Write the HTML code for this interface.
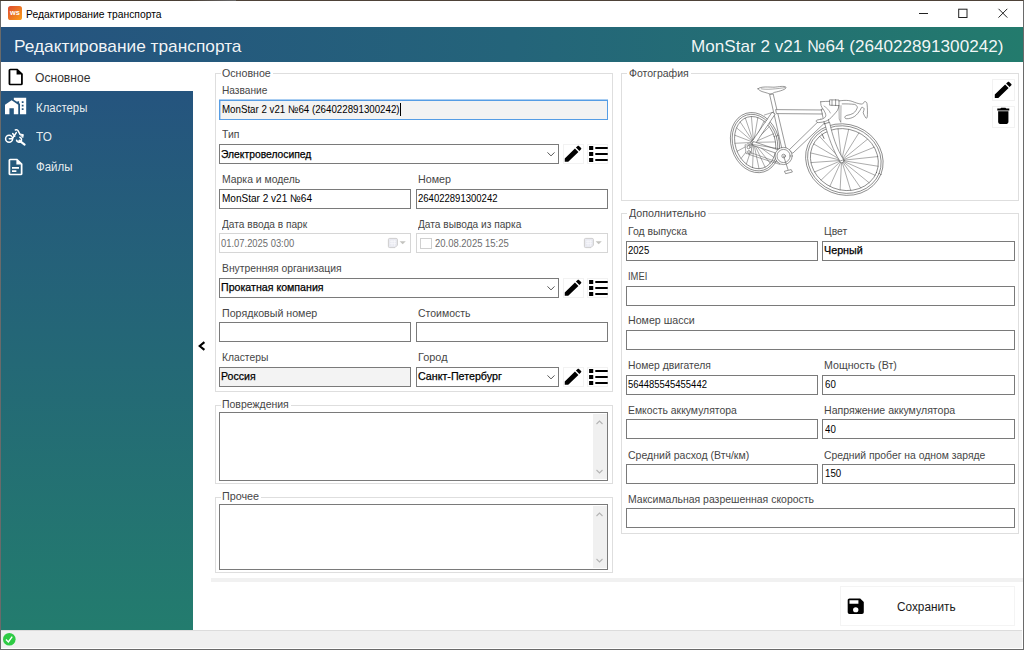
<!DOCTYPE html>
<html lang="ru">
<head>
<meta charset="utf-8">
<title>Редактирование транспорта</title>
<style>
*{box-sizing:border-box;margin:0;padding:0}
html,body{width:1024px;height:650px;overflow:hidden;background:#fff}
body{font-family:"Liberation Sans",sans-serif;font-size:12px;color:#000;position:relative}
div,svg{position:absolute}
svg{display:block;overflow:visible}
#frame{left:0;top:0;width:1024px;height:650px;border:1px solid #6a6a6a;border-top-color:#4e4238;z-index:50;pointer-events:none}
#titlebar{left:1px;top:1px;width:1022px;height:26px;background:#fff}
#header{left:1px;top:27px;width:1022px;height:35px;background:linear-gradient(90deg,#25527f 0%,#24647a 50%,#237b6d 100%)}
#side{left:1px;top:62px;width:192px;height:568px;background:linear-gradient(180deg,#25527f 0%,#237c6e 100%)}
#sel{left:1px;top:62px;width:192px;height:29px;background:#fff}
#status{left:1px;top:630px;width:1021px;height:18px;background:#f0f0f0;border-top:1px solid #dcdcdc}
#sep{left:211px;top:578px;width:812px;height:4px;background:#f1f1f1}
.gb{border:1px solid #dedede}
.lgbg{height:5px;background:#fff}
.in{border:1px solid #7a7a7a;background:#fff}
.in.ro{background:#f3f3f3}
.in.dis{border-color:#d6d6d6}
.in.foc{border-color:#569de5;box-shadow:0 -1px 0 rgba(86,157,229,.5),inset 1px 0 0 rgba(86,157,229,.4)}
.btn{border:1px solid #f2f2f2;background:#fff}
.t{line-height:16px;white-space:nowrap;transform-origin:0 50%}
.t.txb{-webkit-text-stroke:0.25px #000}
.t.title{font-size:10.6px;color:#000;font-weight:400}
.t.hdr{font-size:17px;color:rgba(255,255,255,.94);font-weight:400}
.t.side{font-size:12px;color:rgba(255,255,255,.9);font-weight:400}
.t.sidesel{font-size:12px;color:#333;font-weight:400}
.t.lb{font-size:10.4px;color:#464646;font-weight:400}
.t.lg{font-size:10.4px;color:#464646;font-weight:400}
.t.tx{font-size:11px;color:#000;font-weight:400}
.t.txd{font-size:11px;color:#6d6d6d;font-weight:400}
.t.txb{font-size:11px;color:#000;font-weight:400}
.t.save{font-size:12px;color:#1a1a1a;font-weight:400}
.sb{background:#f0f0f0}
</style>
</head>
<body>
<div id="titlebar"></div>
<div id="header"></div>
<div id="side"></div>
<div id="sel"></div>
<div id="status"></div>
<div id="sep"></div>
<div class="btn" style="left:840px;top:586px;width:175px;height:40px;border-color:#f4f4f4"></div>
<div class="gb" style="left:215px;top:73px;width:398px;height:319px"></div>
<div class="lgbg" style="left:221px;top:71px;width:52px"></div>
<div class="gb" style="left:215px;top:405px;width:398px;height:79px"></div>
<div class="lgbg" style="left:221px;top:403px;width:70px"></div>
<div class="gb" style="left:215px;top:497px;width:398px;height:76px"></div>
<div class="lgbg" style="left:221px;top:495px;width:40px"></div>
<div class="gb" style="left:621px;top:73px;width:398px;height:128px"></div>
<div class="lgbg" style="left:627px;top:71px;width:64px"></div>
<div class="gb" style="left:621px;top:213px;width:398px;height:321px"></div>
<div class="lgbg" style="left:627px;top:211px;width:81px"></div>
<div class="in ro foc" style="left:219px;top:100px;width:389px;height:20px"></div>
<div class="in " style="left:219px;top:144px;width:340px;height:20px"></div>
<div class="in " style="left:219px;top:189px;width:192px;height:20px"></div>
<div class="in " style="left:416px;top:189px;width:192px;height:20px"></div>
<div class="in dis" style="left:219px;top:233px;width:192px;height:20px"></div>
<div class="in dis" style="left:416px;top:233px;width:192px;height:20px"></div>
<div class="in " style="left:219px;top:278px;width:340px;height:20px"></div>
<div class="in " style="left:219px;top:322px;width:192px;height:20px"></div>
<div class="in " style="left:416px;top:322px;width:192px;height:20px"></div>
<div class="in ro" style="left:219px;top:367px;width:192px;height:20px"></div>
<div class="in " style="left:416px;top:367px;width:143px;height:20px"></div>
<div class="in " style="left:219px;top:412px;width:389px;height:69px"></div>
<div class="in " style="left:219px;top:504px;width:389px;height:66px"></div>
<div class="in " style="left:626px;top:241px;width:192px;height:20px"></div>
<div class="in " style="left:822px;top:241px;width:193px;height:20px"></div>
<div class="in " style="left:626px;top:286px;width:389px;height:20px"></div>
<div class="in " style="left:626px;top:330px;width:389px;height:20px"></div>
<div class="in " style="left:626px;top:375px;width:192px;height:20px"></div>
<div class="in " style="left:822px;top:375px;width:193px;height:20px"></div>
<div class="in " style="left:626px;top:419px;width:192px;height:20px"></div>
<div class="in " style="left:822px;top:419px;width:193px;height:20px"></div>
<div class="in " style="left:626px;top:464px;width:192px;height:20px"></div>
<div class="in " style="left:822px;top:464px;width:193px;height:20px"></div>
<div class="in " style="left:626px;top:508px;width:389px;height:20px"></div>
<!-- app icon -->
<svg style="left:8px;top:6px" width="14" height="14" viewBox="0 0 14 14"><defs><linearGradient id="wsg" x1="0" y1="0" x2="1" y2="1"><stop offset="0" stop-color="#dd4a2e"/><stop offset="1" stop-color="#fb9f1a"/></linearGradient></defs><rect width="14" height="14" rx="2.6" fill="url(#wsg)"/><text x="7" y="9.3" text-anchor="middle" font-family="Liberation Sans, sans-serif" font-weight="700" font-size="7.4" fill="#fff">ws</text></svg>
<!-- window controls -->
<svg style="left:915px;top:4px" width="100" height="20" viewBox="0 0 100 20"><g fill="none" stroke="#222" stroke-width="1"><path d="M4,9.5H13"/><rect x="43.7" y="5.2" width="8.3" height="8.3"/><path d="M83.5,4.8L92.3,13.6M92.3,4.8L83.5,13.6"/></g></svg>
<!-- caret -->
<div style="left:400px;top:103px;width:1px;height:13px;background:#000"></div>
<!-- checkbox -->
<div style="left:420px;top:238px;width:12px;height:11px;border:1px solid #d0d0d0;background:#fff"></div>
<!-- calendar icons -->
<svg style="left:388px;top:238px" width="18" height="10" viewBox="0 0 18 10"><path d="M1.6,0.4H8.2Q9.4,0.4 9.4,1.6V7.2L7,9.6H1.6Q0.4,9.6 0.4,8.4V1.6Q0.4,0.4 1.6,0.4Z" fill="#e9eaf1" stroke="#cbc9c9" stroke-width="0.9"/><path d="M2,3.3H8M2,5.6H8M4,2V8M6.4,2V8" stroke="#f9f9fc" stroke-width="0.7"/><path d="M11.6,3.2H17.8L14.7,6.3Z" fill="#c3c3bf"/></svg>
<svg style="left:584.3px;top:238px" width="18" height="10" viewBox="0 0 18 10"><path d="M1.6,0.4H8.2Q9.4,0.4 9.4,1.6V7.2L7,9.6H1.6Q0.4,9.6 0.4,8.4V1.6Q0.4,0.4 1.6,0.4Z" fill="#e9eaf1" stroke="#cbc9c9" stroke-width="0.9"/><path d="M2,3.3H8M2,5.6H8M4,2V8M6.4,2V8" stroke="#f9f9fc" stroke-width="0.7"/><path d="M11.6,3.2H17.8L14.7,6.3Z" fill="#c3c3bf"/></svg>
<!-- scrollbars -->
<div class="sb" style="left:593px;top:414px;width:14px;height:65px"></div>
<div class="sb" style="left:593px;top:506px;width:14px;height:62px"></div>
<svg style="left:595.5px;top:419.5px" width="7" height="5" viewBox="0 0 7 5"><path d="M0.5,4L3.5,1L6.5,4" fill="none" stroke="#b4b4b4" stroke-width="1.1"/></svg>
<svg style="left:595.5px;top:468.5px" width="7" height="5" viewBox="0 0 7 5"><path d="M0.5,1L3.5,4L6.5,1" fill="none" stroke="#b4b4b4" stroke-width="1.1"/></svg>
<svg style="left:595.5px;top:511.5px" width="7" height="5" viewBox="0 0 7 5"><path d="M0.5,4L3.5,1L6.5,4" fill="none" stroke="#b4b4b4" stroke-width="1.1"/></svg>
<svg style="left:595.5px;top:558px" width="7" height="5" viewBox="0 0 7 5"><path d="M0.5,1L3.5,4L6.5,1" fill="none" stroke="#b4b4b4" stroke-width="1.1"/></svg>
<!-- collapse arrow -->
<svg style="left:198.3px;top:341px" width="8" height="10" viewBox="0 0 8 10"><path d="M6.4,1.1L1.7,5L6.4,8.9" fill="none" stroke="#000" stroke-width="2.1"/></svg>
<!-- status ok -->
<svg style="left:2.7px;top:633.2px" width="12.6" height="12.6" viewBox="0 0 12.6 12.6"><circle cx="6.3" cy="6.3" r="6.3" fill="#2ecb44"/><path d="M3,6.6L5.4,9L9.2,3.6" fill="none" stroke="#fff" stroke-width="1.4"/></svg>
<!-- TO icon -->
<svg style="left:0px;top:122px" width="40" height="30" viewBox="0 0 40 30"><g fill="none" stroke="#fff" stroke-width="1.5" stroke-linecap="round" stroke-linejoin="round"><circle cx="9.1" cy="16.7" r="3.5"/><path d="M9.3,16.7H12.4L16.3,10.6"/><path d="M12.7,11.5L14.7,14.3"/><path d="M15.3,8C16.6,7.3 17.9,7.9 18.3,9.2L19.8,12"/><path d="M19.8,12L23.3,12.6L22.9,15.2Z" fill="#fff" stroke-width="1"/><path d="M19.4,18.6L24.6,22.6" stroke-width="2.1"/><path d="M19.9,15.3A2.5,2.5 0 1 1 16.6,18.2" stroke-width="1.6"/></g></svg>
<svg style="left:720px;top:74px" width="180" height="130" viewBox="0 0 900 650"><g fill="none" stroke="#505050" stroke-width="2.9" stroke-linecap="round" stroke-linejoin="round">
<ellipse cx="175" cy="343" rx="120" ry="153" transform="rotate(-17 175 343)"/>
<ellipse cx="175" cy="343" rx="111" ry="144" transform="rotate(-17 175 343)"/>
<ellipse cx="176" cy="343" rx="100" ry="133" transform="rotate(-17 176 343)"/>
<path stroke-width="2.4" d="M168,342L277.4,339.6M168,342L278.4,380.1M168,342L269.3,416.9M168,342L251.1,446.6M168,342L225.5,466.0M168,342L195.1,473.5M168,342L162.8,468.1M168,342L131.8,450.5M168,342L105.2,422.4M168,342L85.4,386.5M168,342L74.6,346.4M168,342L73.6,305.9M168,342L82.7,269.1M168,342L100.9,239.4M168,342L126.5,220.0M168,342L156.9,212.5M168,342L189.2,217.9M168,342L220.2,235.5M168,342L246.8,263.6M168,342L266.6,299.5"/>
<ellipse cx="622" cy="428" rx="197" ry="176" transform="rotate(22 622 428)"/>
<ellipse cx="622" cy="428" rx="187" ry="166" transform="rotate(22 622 428)"/>
<ellipse cx="622" cy="428" rx="173" ry="152" transform="rotate(22 622 428)"/>
<path stroke-width="2.4" d="M608,432L775.9,506.6M608,432L745.9,544.0M608,432L703.8,570.2M608,432L653.7,582.4M608,432L600.5,579.5M608,432L549.3,561.8M608,432L505.3,530.9M608,432L472.7,490.0M608,432L454.8,443.1M608,432L453.2,394.6M608,432L468.1,349.4M608,432L498.1,312.0M608,432L540.2,285.8M608,432L590.3,273.6M608,432L643.5,276.5M608,432L694.7,294.2M608,432L738.7,325.1M608,432L771.3,366.0M608,432L789.2,412.9M608,432L790.8,461.4"/>
<circle cx="608" cy="432" r="12" fill="#fff"/>
<circle cx="168" cy="342" r="13" fill="#fff"/>

<path fill="#fff" d="M250,102L266,100L334,388L316,394Z"/>
<path fill="#fff" d="M280,178L516,180L514,200L284,198Z"/>
<path fill="#fff" d="M506,226L526,242L364,396L346,382Z"/>
<path fill="#fff" d="M262,192L276,200L176,350L160,340Z"/>
<path fill="#fff" d="M168,338L316,388L310,406L162,356Z"/>
<path fill="#fff" d="M508,176L528,172L546,244L524,250Z"/>
<path fill="#fff" d="M524,248L548,242C560,300 585,380 618,428L600,436C568,390 540,310 524,248Z"/>
<path d="M222,205L262,192M138,348L300,374M143,402L299,452M150,392L296,444" stroke-width="2.4"/><path d="M127,354L159,358L156,400L132,398Z" fill="#fff" stroke-width="2.4"/>
<circle cx="318" cy="410" r="43" fill="#fff"/><circle cx="318" cy="410" r="33"/><circle cx="318" cy="410" r="9"/>
<path d="M318,410L340,478M324,486L356,478L362,490L330,498Z" />
<circle cx="143" cy="366" r="8"/><circle cx="145" cy="390" r="7"/>
<path fill="#fff" d="M190,74C200,60 250,66 270,66C295,64 320,58 330,66C334,76 300,86 272,92C262,100 246,102 238,96C222,90 196,88 190,74Z"/>
<path d="M206,74C230,80 290,74 324,68" stroke-width="2.4"/>
<path fill="#fff" stroke="none" d="M503.500,138.600L548,136.600L595,134.700L642,132.700L681,144.500L712.500,150L724,137.800L735,148L736,216.700L730,220.600L716,193L721,173.700L708.600,166.700L689,197L654,220.600L630.500,223.700L624.600,214.800L634,207L665.600,197L687,166L673,152L611,149.500L605,158L603,240L595,225L595,158L587.500,181.600L564,209L529,236L493.700,243L482,238L484,230.400L513,224.500L529,209L517,177.700L505.500,158Z"/>
<path d="M503.500,138.600C520,137 535,137 548,136.600M595,134.700C610,132 630,131 642,132.700C660,135 670,141 681,144.500C695,149 705,151 712.500,150C718,146 720,138 724,137.800C730,138 734,142 735,148C738,170 738,200 736,216.700C734,221 732,221 730,220.600C724,212 718,202 716,193C717,186 721,180 721,173.700C718,168 712,166 708.600,166.700C702,178 697,188 689,197C680,208 668,217 654,220.600C646,223 638,224 630.500,223.700C625,222 623,218 624.600,214.800C626,210 630,208 634,207C646,205 657,202 665.600,197C676,190 684,178 687,166C684,158 679,154 673,152C655,150 630,149 611,149.500"/>
<path d="M503.500,138.600C503,146 504,152 505.500,158C508,166 513,172 517,177.700C523,188 530,200 529,209C527,217 520,222 513,224.500C503,227 492,228 484,230.400C481,233 480,236 482,238C485,242 489,243 493.700,243C506,242 518,240 529,236C543,230 556,220 564,209C574,198 582,190 587.500,181.600C591,174 594,166 595,158"/>
<path d="M548,131L548,156L595,158L595,132Z M560,131L560,157M578,128L578,158"/>
<path d="M595,158L596,225L603,240M605,158L604,240" stroke-width="2.4"/>
<path d="M520,160C535,170 545,180 552,195" stroke-width="2.4"/>
<path d="M510,300L520,322" stroke-width="4"/>

</g></svg>
<div class="btn" style="left:563px;top:144px;width:21px;height:20px"></div>
<div class="btn" style="left:587px;top:144px;width:21px;height:20px"></div>
<svg style="left:562.03px;top:142.92px" width="22.13" height="21.47" viewBox="0 0 24 24" preserveAspectRatio="none"><path fill="#000" d="M20.71,7.04C21.1,6.65 21.1,6 20.71,5.63L18.37,3.29C18,2.9 17.35,2.9 16.96,3.29L15.12,5.12L18.87,8.87M3,17.25V21H6.75L17.81,9.93L14.06,6.18L3,17.25Z"/></svg>
<svg style="left:585.70px;top:142.00px" width="24.80" height="24.00" viewBox="0 0 24 24" preserveAspectRatio="none"><path fill="#000" d="M3,4H7V8H3V4M9,5V7H21V5H9M3,10H7V14H3V10M9,11V13H21V11H9M3,16H7V20H3V16M9,17V19H21V17H9"/></svg>
<svg style="left:546.4px;top:151.1px" width="10" height="7" viewBox="0 0 10 7"><path d="M1.5,1.4L5,4.9L8.5,1.4" fill="none" stroke="#555" stroke-width="1"/></svg>
<div class="btn" style="left:563px;top:278px;width:21px;height:20px"></div>
<div class="btn" style="left:587px;top:278px;width:21px;height:20px"></div>
<svg style="left:562.03px;top:276.92px" width="22.13" height="21.47" viewBox="0 0 24 24" preserveAspectRatio="none"><path fill="#000" d="M20.71,7.04C21.1,6.65 21.1,6 20.71,5.63L18.37,3.29C18,2.9 17.35,2.9 16.96,3.29L15.12,5.12L18.87,8.87M3,17.25V21H6.75L17.81,9.93L14.06,6.18L3,17.25Z"/></svg>
<svg style="left:585.70px;top:276.00px" width="24.80" height="24.00" viewBox="0 0 24 24" preserveAspectRatio="none"><path fill="#000" d="M3,4H7V8H3V4M9,5V7H21V5H9M3,10H7V14H3V10M9,11V13H21V11H9M3,16H7V20H3V16M9,17V19H21V17H9"/></svg>
<svg style="left:546.4px;top:285.1px" width="10" height="7" viewBox="0 0 10 7"><path d="M1.5,1.4L5,4.9L8.5,1.4" fill="none" stroke="#555" stroke-width="1"/></svg>
<div class="btn" style="left:563px;top:367px;width:21px;height:20px"></div>
<div class="btn" style="left:587px;top:367px;width:21px;height:20px"></div>
<svg style="left:562.03px;top:365.92px" width="22.13" height="21.47" viewBox="0 0 24 24" preserveAspectRatio="none"><path fill="#000" d="M20.71,7.04C21.1,6.65 21.1,6 20.71,5.63L18.37,3.29C18,2.9 17.35,2.9 16.96,3.29L15.12,5.12L18.87,8.87M3,17.25V21H6.75L17.81,9.93L14.06,6.18L3,17.25Z"/></svg>
<svg style="left:585.70px;top:365.00px" width="24.80" height="24.00" viewBox="0 0 24 24" preserveAspectRatio="none"><path fill="#000" d="M3,4H7V8H3V4M9,5V7H21V5H9M3,10H7V14H3V10M9,11V13H21V11H9M3,16H7V20H3V16M9,17V19H21V17H9"/></svg>
<svg style="left:546.4px;top:374.1px" width="10" height="7" viewBox="0 0 10 7"><path d="M1.5,1.4L5,4.9L8.5,1.4" fill="none" stroke="#555" stroke-width="1"/></svg>
<div class="btn" style="left:992px;top:79px;width:23px;height:22px"></div>
<div class="btn" style="left:992px;top:106px;width:23px;height:22px"></div>
<svg style="left:991.90px;top:79.30px" width="22.40" height="21.60" viewBox="0 0 24 24" preserveAspectRatio="none"><path fill="#000" d="M20.71,7.04C21.1,6.65 21.1,6 20.71,5.63L18.37,3.29C18,2.9 17.35,2.9 16.96,3.29L15.12,5.12L18.87,8.87M3,17.25V21H6.75L17.81,9.93L14.06,6.18L3,17.25Z"/></svg>
<svg style="left:992.91px;top:105.10px" width="20.57" height="21.60" viewBox="0 0 24 24" preserveAspectRatio="none"><path fill="#000" d="M19,4H15.5L14.5,3H9.5L8.5,4H5V6H19M6,19A2,2 0 0,0 8,21H16A2,2 0 0,0 18,19V7H6V19Z"/></svg>
<svg style="left:844.72px;top:595.92px" width="21.47" height="20.67" viewBox="0 0 24 24" preserveAspectRatio="none"><path fill="#000" d="M15,9H5V5H15M12,19A3,3 0 0,1 9,16A3,3 0 0,1 12,13A3,3 0 0,1 15,16A3,3 0 0,1 12,19M17,3H5C3.89,3 3,3.9 3,5V19A2,2 0 0,0 5,21H19A2,2 0 0,0 21,19V7L17,3Z"/></svg>
<svg style="left:5.04px;top:66.93px" width="21.38" height="20.04" viewBox="0 0 24 24" preserveAspectRatio="none"><path fill="#000" d="M14,2H6A2,2 0 0,0 4,4V20A2,2 0 0,0 6,22H18A2,2 0 0,0 20,20V8L14,2M18,20H6V4H13V9H18V20Z"/></svg>
<svg style="left:5.10px;top:96.06px" width="21.20" height="20.84" viewBox="0 0 24 24" preserveAspectRatio="none"><path fill="#fff" d="M0,21V10L7.5,5L15,10V21H10V14H5V21H0M24,2V21H17V8.93L16,8.27V6H14V6.93L10,4.27V2H24M21,14H19V16H21V14M21,10H19V12H21V10M21,6H19V8H21V6Z"/></svg>
<svg style="left:5.40px;top:156.93px" width="21.00" height="20.04" viewBox="0 0 24 24" preserveAspectRatio="none"><path fill="#fff" d="M6,2A2,2 0 0,0 4,4V20A2,2 0 0,0 6,22H18A2,2 0 0,0 20,20V8L14,2H6M6,4H13V9H18V20H6V4M8,12V14H16V12H8M8,16V18H13V16H8Z"/></svg>
<div class="t title" style="left:25.6px;top:6.1px;transform:scaleX(0.9724)">Редактирование транспорта</div>
<div class="t hdr" style="left:13.8px;top:39.3px;transform:scaleX(1.0174)">Редактирование транспорта</div>
<div class="t hdr" style="left:690.5px;top:39.3px;transform:scaleX(1.0068)">MonStar 2 v21 №64 (264022891300242)</div>
<div class="t sidesel" style="left:35.4px;top:69.7px;transform:scaleX(1.0076)">Основное</div>
<div class="t side" style="left:35.6px;top:99.6px;transform:scaleX(0.9519)">Кластеры</div>
<div class="t side" style="left:35.6px;top:129.4px;transform:scaleX(0.9798)">ТО</div>
<div class="t side" style="left:35.6px;top:159.0px;transform:scaleX(0.9570)">Файлы</div>
<div class="t lg" style="left:222.1px;top:66.3px;transform:scaleX(1.0247)">Основное</div>
<div class="t lb" style="left:221.9px;top:82.7px;transform:scaleX(0.9755)">Название</div>
<div class="t tx" style="left:221.6px;top:101.1px;transform:scaleX(0.8845)">MonStar 2 v21 №64 (264022891300242)</div>
<div class="t lb" style="left:221.9px;top:127.0px;transform:scaleX(1.0041)">Тип</div>
<div class="t txb" style="left:221.3px;top:145.6px;transform:scaleX(0.9374)">Электровелосипед</div>
<div class="t lb" style="left:221.9px;top:172.1px;transform:scaleX(1.0020)">Марка и модель</div>
<div class="t lb" style="left:418.1px;top:172.1px;transform:scaleX(1.0318)">Номер</div>
<div class="t tx" style="left:221.6px;top:190.4px;transform:scaleX(0.9124)">MonStar 2 v21 №64</div>
<div class="t tx" style="left:418.1px;top:190.4px;transform:scaleX(0.8663)">264022891300242</div>
<div class="t lb" style="left:221.5px;top:217.0px;transform:scaleX(0.9767)">Дата ввода в парк</div>
<div class="t lb" style="left:418.1px;top:217.0px;transform:scaleX(0.9767)">Дата вывода из парка</div>
<div class="t txd" style="left:221.1px;top:234.9px;transform:scaleX(0.8547)">01.07.2025 03:00</div>
<div class="t txd" style="left:434.9px;top:234.9px;transform:scaleX(0.8617)">20.08.2025 15:25</div>
<div class="t lb" style="left:221.7px;top:261.3px;transform:scaleX(0.9948)">Внутренняя организация</div>
<div class="t txb" style="left:221.3px;top:279.1px;transform:scaleX(0.9662)">Прокатная компания</div>
<div class="t lb" style="left:221.7px;top:306.0px;transform:scaleX(1.0254)">Порядковый номер</div>
<div class="t lb" style="left:418.1px;top:306.0px;transform:scaleX(1.0090)">Стоимость</div>
<div class="t lb" style="left:221.7px;top:350.3px;transform:scaleX(0.9900)">Кластеры</div>
<div class="t lb" style="left:418.1px;top:350.3px;transform:scaleX(1.0495)">Город</div>
<div class="t txb" style="left:221.3px;top:368.2px;transform:scaleX(0.9590)">Россия</div>
<div class="t txb" style="left:417.5px;top:368.2px;transform:scaleX(0.9712)">Санкт-Петербург</div>
<div class="t lg" style="left:222.3px;top:397.4px;transform:scaleX(1.0095)">Повреждения</div>
<div class="t lg" style="left:222.3px;top:489.4px;transform:scaleX(1.0369)">Прочее</div>
<div class="t lg" style="left:628.5px;top:66.3px;transform:scaleX(1.0101)">Фотография</div>
<div class="t lg" style="left:628.5px;top:206.0px;transform:scaleX(1.0295)">Дополнительно</div>
<div class="t lb" style="left:628.2px;top:224.2px;transform:scaleX(1.0038)">Год выпуска</div>
<div class="t lb" style="left:824.3px;top:224.2px;transform:scaleX(0.9958)">Цвет</div>
<div class="t tx" style="left:627.9px;top:242.2px;transform:scaleX(0.8659)">2025</div>
<div class="t txb" style="left:824.3px;top:242.2px;transform:scaleX(0.9773)">Черный</div>
<div class="t lb" style="left:628.2px;top:268.5px;transform:scaleX(0.9076)">IMEI</div>
<div class="t lb" style="left:628.2px;top:313.4px;transform:scaleX(1.0247)">Номер шасси</div>
<div class="t lb" style="left:628.2px;top:358.2px;transform:scaleX(0.9959)">Номер двигателя</div>
<div class="t lb" style="left:824.3px;top:358.2px;transform:scaleX(1.0233)">Мощность (Вт)</div>
<div class="t tx" style="left:627.9px;top:376.2px;transform:scaleX(0.8598)">564485545455442</div>
<div class="t tx" style="left:824.9px;top:376.2px;transform:scaleX(0.8816)">60</div>
<div class="t lb" style="left:628.2px;top:402.6px;transform:scaleX(1.0006)">Емкость аккумулятора</div>
<div class="t lb" style="left:824.3px;top:402.6px;transform:scaleX(1.0162)">Напряжение аккумулятора</div>
<div class="t tx" style="left:824.9px;top:420.7px;transform:scaleX(0.8816)">40</div>
<div class="t lb" style="left:628.2px;top:447.6px;transform:scaleX(1.0124)">Средний расход (Втч/км)</div>
<div class="t lb" style="left:824.3px;top:447.6px;transform:scaleX(0.9966)">Средний пробег на одном заряде</div>
<div class="t tx" style="left:824.9px;top:465.2px;transform:scaleX(0.8824)">150</div>
<div class="t lb" style="left:628.2px;top:491.6px;transform:scaleX(1.0062)">Максимальная разрешенная скорость</div>
<div class="t save" style="left:896.8px;top:598.6px;transform:scaleX(0.9826)">Сохранить</div>
<div id="frame"></div>
<div style="left:0;top:0;width:236px;height:1px;background:linear-gradient(90deg,#45392e 0,#4a3f35 190px,#6a6a6a 236px);z-index:51"></div>
</body>
</html>
